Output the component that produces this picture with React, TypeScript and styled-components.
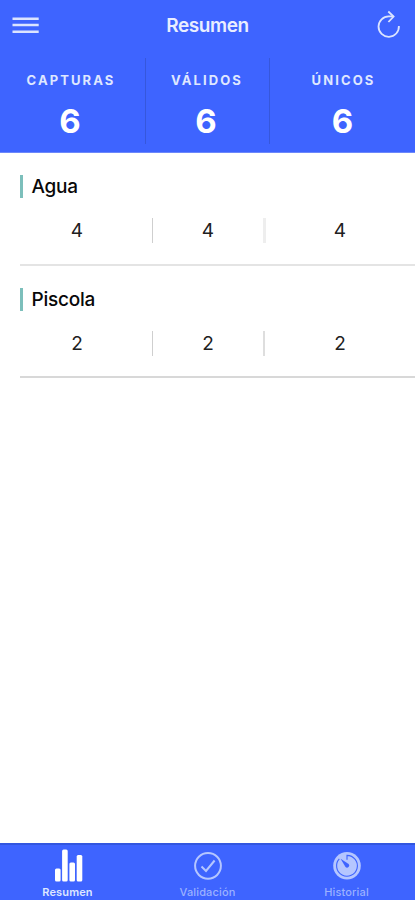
import React from "react";
import styled, { createGlobalStyle } from "styled-components";

const GlobalStyle = createGlobalStyle`
  * { box-sizing: border-box; }
  html, body, #root { margin: 0; height: 100%; }
  body { background: #fff; font-family: Inter, "Liberation Sans", sans-serif; overflow: hidden; }
`;

const Screen = styled.div`
  display: flex;
  flex-direction: column;
  width: 415px;
  height: 900px;
  background: #fff;
  color: #111;
`;

const Header = styled.header`
  height: 153px;
  flex: none;
  background: #3e64ff;
  border-bottom: 1px solid #6c88fb;
  color: #fff;
`;

const NavBar = styled.div`
  display: grid;
  grid-template-columns: 52px 1fr 52px;
  height: 58px;
`;

const IconButton = styled.button`
  display: block;
  width: 52px;
  height: 52px;
  padding: 0;
  border: 0;
  background: none;
  color: #dbe4ff;
  svg { display: block; }
`;

const Title = styled.h1`
  margin: 0;
  padding-top: 13px;
  text-align: center;
  font-size: 19px;
  line-height: 25px;
  font-weight: 600;
  letter-spacing: -0.4px;
  color: #e9eeff;
`;

const Totals = styled.div`
  display: grid;
  grid-template-columns: 145px 124px 146px;
  height: 86px;
`;

const Total = styled.div<{ $shift?: number; $divided?: boolean }>`
  display: flex;
  flex-direction: column;
  align-items: center;
  padding-top: 14px;
  padding-right: ${(p) => p.$shift ?? 0}px;
  border-left: ${(p) => (p.$divided ? "1px solid #3657dc" : "0")};
`;

const TotalLabel = styled.span`
  font-size: 13px;
  line-height: 16px;
  font-weight: 700;
  letter-spacing: 2.1px;
  margin-right: -2px;
  color: #dfe7ff;
`;

const TotalValue = styled.strong`
  margin-top: 13px;
  font-size: 33px;
  line-height: 40px;
  font-weight: 700;
`;

const List = styled.main`
  flex: 1;
  padding-left: 20px;
`;

const Item = styled.section<{ $height: number; $line: string }>`
  height: ${(p) => p.$height}px;
  padding-top: 22px;
  border-bottom: 2px solid ${(p) => p.$line};
`;

const ItemName = styled.h2<{ $drop?: number }>`
  margin: 0;
  height: 23px;
  padding-left: 8.5px;
  border-left: 3px solid #7cbfbb;
  font-size: 19px;
  line-height: ${(p) => 23 + (p.$drop ?? 0)}px;
  font-weight: 500;
  letter-spacing: -0.25px;
  color: #080808;
`;

const Values = styled.div<{ $gap: number }>`
  display: grid;
  grid-template-columns: 132px 111px 152px;
  height: 24px;
  margin-top: ${(p) => p.$gap}px;
`;

const Value = styled.span<{ $edge?: string; $shift?: number }>`
  border-left: ${(p) => p.$edge ?? "0"};
  padding-right: ${(p) => p.$shift ?? 0}px;
  text-align: center;
  font-size: 19px;
  line-height: 25px;
  color: #202020;
`;

const TabBar = styled.nav`
  display: grid;
  grid-template-columns: 137px 141px 137px;
  height: 57px;
  flex: none;
  border-top: 2px solid #3256e0;
  background: #3e64ff;
`;

const Tab = styled.a<{ $active?: boolean }>`
  display: flex;
  flex-direction: column;
  align-items: center;
  padding-top: 4px;
  color: ${(p) => (p.$active ? "#fff" : "#b5c6ff")};
  svg { display: block; }
`;

const TabLabel = styled.span<{ $active?: boolean }>`
  margin-top: 3px;
  margin-right: ${(p) => (p.$active ? 2 : 0)}px;
  font-size: 11px;
  line-height: 12px;
  font-weight: ${(p) => (p.$active ? 600 : 500)};
  letter-spacing: 0.15px;
  color: ${(p) => (p.$active ? "#dfe7ff" : "#9bb1ff")};
`;

const MenuIcon = () => (
  <svg width="52" height="52" stroke="currentColor" strokeWidth="2.6">
    <path d="M12.5 18.7H38.7M12.5 25H38.7M12.5 31.7H38.7" />
  </svg>
);

const RefreshIcon = () => (
  <svg width="52" height="52" fill="none" stroke="currentColor" strokeWidth="1.8">
    <path d="M30.5 16.4H26A10.2 10.2 0 1 0 35.9 26" />
    <path d="M25.3 11.5L30.6 16.6L25.4 22" />
  </svg>
);

const BarsIcon = () => (
  <svg width="32" height="34" fill="currentColor">
    <rect x="2" y="19.5" width="5.6" height="13" rx="1.5" />
    <rect x="9.1" y="0.6" width="5.6" height="31.9" rx="1.5" />
    <rect x="16.4" y="13.5" width="5.6" height="19" rx="1.5" />
    <rect x="23.7" y="6" width="5.6" height="26.5" rx="1.5" />
  </svg>
);

const CheckIcon = () => (
  <svg width="32" height="34" fill="none" stroke="currentColor" strokeWidth="2">
    <circle cx="16" cy="16.8" r="12.9" />
    <path d="M9.5 17.5L14 22L22.6 11.5" />
  </svg>
);

const TimerIcon = () => (
  <svg width="32" height="34">
    <circle cx="16" cy="16.8" r="13.8" fill="currentColor" />
    <path
      d="M16 10.8V6.4A10.4 10.4 0 1 1 8.3 9.8"
      fill="none"
      stroke="#3e64ff"
      strokeWidth="1.1"
    />
    <path d="M9.6 9.8L17.6 14.9A2.1 2.1 0 1 1 14.5 17.9Z" fill="#3e64ff" />
  </svg>
);

export default function App() {
  return (
    <>
      <GlobalStyle />
      <Screen>
        <Header>
          <NavBar>
            <IconButton aria-label="Menú"><MenuIcon /></IconButton>
            <Title>Resumen</Title>
            <IconButton aria-label="Actualizar"><RefreshIcon /></IconButton>
          </NavBar>
          <Totals>
            <Total $shift={5}><TotalLabel>CAPTURAS</TotalLabel><TotalValue>6</TotalValue></Total>
            <Total $divided $shift={3}><TotalLabel>VÁLIDOS</TotalLabel><TotalValue>6</TotalValue></Total>
            <Total $divided><TotalLabel>ÚNICOS</TotalLabel><TotalValue>6</TotalValue></Total>
          </Totals>
        </Header>
        <List>
          <Item $height={113} $line="#e4e4e4">
            <ItemName $drop={1}>Agua</ItemName>
            <Values $gap={20}>
              <Value $shift={18}>4</Value>
              <Value $edge="1px solid #cfcfcf">4</Value>
              <Value $edge="3px solid #eeeeee" $shift={1}>4</Value>
            </Values>
          </Item>
          <Item $height={112} $line="#d8d8d8">
            <ItemName>Piscola</ItemName>
            <Values $gap={20}>
              <Value $shift={18}>2</Value>
              <Value $edge="1px solid #cfcfcf">2</Value>
              <Value $edge="2px solid #dedede" $shift={0}>2</Value>
            </Values>
          </Item>
        </List>
        <TabBar>
          <Tab $active><BarsIcon /><TabLabel $active>Resumen</TabLabel></Tab>
          <Tab><CheckIcon /><TabLabel>Validación</TabLabel></Tab>
          <Tab><TimerIcon /><TabLabel>Historial</TabLabel></Tab>
        </TabBar>
      </Screen>
    </>
  );
}
